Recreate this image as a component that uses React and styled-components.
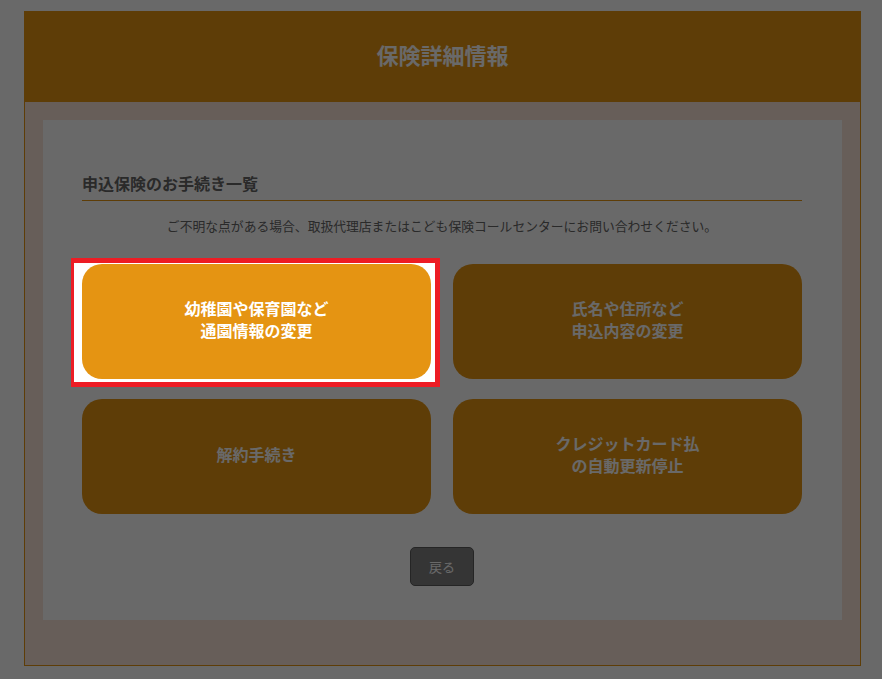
import React from 'react';
import styled, { createGlobalStyle } from 'styled-components';

const GlobalStyle = createGlobalStyle`
  html, body {
    margin: 0;
    padding: 0;
    background: #ffffff;
    font-family: "Noto Sans CJK JP", "Noto Sans", sans-serif;
  }
  * { box-sizing: border-box; }
`;

const Frame = styled.div`
  margin: 11px 21px 0 24px;
  border: 1px solid #e59412;
  background: #fbe5d8;
`;

const Header = styled.h1`
  margin: 0;
  height: 90px;
  padding-bottom: 7px;
  background: #e59412;
  color: #ffffff;
  font-size: 22px;
  font-weight: bold;
  display: flex;
  align-items: center;
  justify-content: center;
`;

const Body = styled.div`
  padding: 18px 18px 45px;
`;

const Panel = styled.div`
  background: #ffffff;
  padding: 51px 40px 34px 39px;
  display: flex;
  flex-direction: column;
`;

const SectionTitle = styled.h2`
  margin: 0;
  font-size: 16px;
  line-height: 24px;
  font-weight: bold;
  color: #666666;
  padding-bottom: 5px;
  border-bottom: 1px solid #e59412;
`;

const Notice = styled.p`
  margin: 16px 0 0;
  font-size: 12.8px;
  line-height: 18px;
  color: #666666;
  text-align: center;
`;

const Grid = styled.div`
  margin-top: 29px;
  display: grid;
  grid-template-columns: 1fr 1fr;
  column-gap: 22px;
  row-gap: 20px;
`;

const Card = styled.button`
  width: 100%;
  height: 115px;
  padding: 0 0 6px;
  border: none;
  border-radius: 20px;
  background: #e59412;
  color: #ffffff;
  font-family: inherit;
  font-size: 16px;
  font-weight: bold;
  line-height: 22px;
  display: flex;
  align-items: center;
  justify-content: center;
  text-align: center;
  cursor: pointer;
`;

const Spotlight = styled.div`
  position: relative;
  z-index: 20;

  &::before {
    content: '';
    position: absolute;
    top: -6px;
    left: -11px;
    right: -9px;
    bottom: -8px;
    background: #ffffff;
    border: 5px solid #ed1c24;
    border-left-width: 3px;
    z-index: -1;
  }
`;

const Footer = styled.div`
  margin-top: 33px;
  display: flex;
  justify-content: center;
`;

const BackButton = styled.button`
  width: 64px;
  height: 39px;
  border: 1px solid #5a5a5a;
  border-radius: 5px;
  background: #828282;
  color: #ffffff;
  font-family: inherit;
  font-size: 13px;
  cursor: pointer;
`;

const Overlay = styled.div`
  position: fixed;
  inset: 0;
  background: rgba(0, 0, 0, 0.59);
  z-index: 10;
`;

const menu = [
  ['幼稚園や保育園など', '通園情報の変更'],
  ['氏名や住所など', '申込内容の変更'],
  ['解約手続き'],
  ['クレジットカード払', 'の自動更新停止'],
];

function Label({ lines }) {
  return (
    <span>
      {lines.map((l, i) => (
        <React.Fragment key={i}>
          {i > 0 && <br />}
          {l}
        </React.Fragment>
      ))}
    </span>
  );
}

export default function App() {
  return (
    <>
      <GlobalStyle />
      <Frame>
        <Header>保険詳細情報</Header>
        <Body>
          <Panel>
            <SectionTitle>申込保険のお手続き一覧</SectionTitle>
            <Notice>
              ご不明な点がある場合、取扱代理店またはこども保険コールセンターにお問い合わせください。
            </Notice>
            <Grid>
              {menu.map((lines, i) =>
                i === 0 ? (
                  <Spotlight key={i}>
                    <Card>
                      <Label lines={lines} />
                    </Card>
                  </Spotlight>
                ) : (
                  <Card key={i}>
                    <Label lines={lines} />
                  </Card>
                )
              )}
            </Grid>
            <Footer>
              <BackButton>戻る</BackButton>
            </Footer>
          </Panel>
        </Body>
      </Frame>
      <Overlay />
    </>
  );
}
